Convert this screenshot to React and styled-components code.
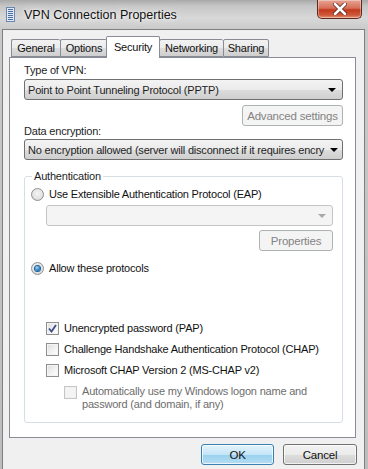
import React from 'react';
import styled, { createGlobalStyle } from 'styled-components';

const GlobalStyle = createGlobalStyle`
  html, body { margin: 0; padding: 0; background: #c4c4c4; }
  body {
    font-family: "Liberation Sans", Arial, sans-serif;
    font-size: 11px;
    letter-spacing: -0.2px;
    color: #1e1e1e;
  }
`;

const Window = styled.div`
  width: 368px;
  height: 469px;
  overflow: hidden;
  background: linear-gradient(180deg, #a9a9a9 0px, #c6c6c6 6px, #d8d8d8 18px, #c9c9c9 30px, #bdbdbd 100%);
  display: flex;
  flex-direction: column;
`;

const TitleBar = styled.div`
  height: 29px;
  display: flex;
  align-items: flex-start;
  flex-shrink: 0;
`;

const TitleGroup = styled.div`
  display: flex;
  align-items: center;
  gap: 9px;
  padding: 7px 0 0 6px;
  flex: 1;
`;

const Title = styled.span`
  font-size: 12.5px;
  letter-spacing: 0;
  color: #111;
  text-shadow: 0 0 8px rgba(255, 255, 255, 0.9), 0 0 3px rgba(255, 255, 255, 0.9);
`;

const CloseButton = styled.div`
  width: 43px;
  height: 18px;
  margin-right: 6px;
  border: 1px solid #5a2a20;
  border-top: none;
  border-radius: 0 0 5px 5px;
  background: linear-gradient(180deg, #e6a493 0%, #d66f59 45%, #c2391c 55%, #cf5a3c 85%, #e69a7c 100%);
  box-shadow: inset 0 0 0 1px rgba(255, 255, 255, 0.35);
  display: flex;
  align-items: center;
  justify-content: center;
`;

const Client = styled.div`
  flex: 1;
  margin: 0 3px 0 2px;
  background: #f0f0f0;
  border: 1px solid #7f7f7f;
  border-bottom: none;
  padding: 6px 7px 0 6px;
  display: flex;
  flex-direction: column;
`;

const TabStrip = styled.div`
  display: flex;
  align-items: flex-end;
  height: 21px;
  padding-left: 2px;
  position: relative;
  z-index: 1;
`;

const Tab = styled.div`
  width: ${(p) => p.w}px;
  height: ${(p) => (p.active ? '22px' : '18px')};
  margin: 0 ${(p) => (p.active ? '-1px' : '0')} ${(p) => (p.active ? '-1px' : '0')};
  box-sizing: border-box;
  display: flex;
  align-items: center;
  justify-content: center;
  padding-bottom: ${(p) => (p.active ? '2px' : '0')};
  border: 1px solid #898c95;
  border-bottom: ${(p) => (p.active ? 'none' : '1px solid #898c95')};
  border-right: ${(p) => (p.active || p.last ? '1px solid #898c95' : 'none')};
  border-radius: 2px 2px 0 0;
  background: ${(p) => (p.active ? '#fff' : 'linear-gradient(180deg, #f2f2f2 0%, #ebebeb 50%, #dddddd 51%, #cfcfcf 100%)')};
  color: #111;
  position: relative;
  z-index: ${(p) => (p.active ? 2 : 1)};
`;

const Panel = styled.div`
  width: 347px;
  height: 381px;
  box-sizing: border-box;
  background: #fff;
  border: 1px solid #898c95;
  padding: 5px 12px 0 14px;
  display: flex;
  flex-direction: column;
`;

const Label = styled.div`
  height: 14px;
  line-height: 14px;
  margin-top: ${(p) => p.mt || 0}px;
`;

const Select = styled.div`
  height: 21px;
  box-sizing: border-box;
  margin-top: ${(p) => p.mt || 0}px;
  margin-left: ${(p) => p.ml || 0}px;
  border: 1px solid ${(p) => (p.disabled ? '#c4c4c4' : '#707070')};
  border-radius: 3px;
  background: ${(p) => (p.disabled ? '#f4f4f4' : 'linear-gradient(180deg, #f3f3f3 0%, #ebebeb 50%, #dddddd 51%, #cfcfcf 100%)')};
  display: flex;
  align-items: center;
  padding: 0 6px 0 3px;
  white-space: nowrap;
`;

const SelectText = styled.span`
  flex: 1;
`;

const Arrow = styled.span`
  width: 0;
  height: 0;
  border-left: 4px solid transparent;
  border-right: 4px solid transparent;
  border-top: 4px solid ${(p) => (p.disabled ? '#a8a8a8' : '#000')};
  margin-left: 6px;
  flex-shrink: 0;
`;

const ButtonRow = styled.div`
  display: flex;
  justify-content: flex-end;
  margin-top: ${(p) => p.mt || 0}px;
`;

const Button = styled.div`
  width: ${(p) => p.w}px;
  height: 21px;
  box-sizing: border-box;
  border-radius: 3px;
  display: flex;
  align-items: center;
  justify-content: center;
  font-size: 11.5px;
  border: 1px solid ${(p) => (p.disabled ? '#adb2b5' : p.primary ? '#3c7fb1' : '#707070')};
  color: ${(p) => (p.disabled ? '#838383' : '#111')};
  background: ${(p) =>
    p.disabled
      ? '#f4f4f4'
      : p.primary
      ? 'linear-gradient(180deg, #e5f4fc 0%, #c4e5f6 50%, #98d1ef 51%, #b5ddf2 100%)'
      : 'linear-gradient(180deg, #f2f2f2 0%, #ebebeb 50%, #dddddd 51%, #cfcfcf 100%)'};
  box-shadow: ${(p) => (p.disabled ? 'none' : 'inset 0 0 0 1px rgba(255,255,255,0.7)')};
`;

const Group = styled.fieldset`
  margin: 9px 0 0 0;
  padding: 0 9px 11px 6px;
  border: 1px solid #d5dfe5;
  border-radius: 3px;
  display: flex;
  flex-direction: column;
`;

const Legend = styled.legend`
  padding: 0 2px;
  margin-left: 1px;
  line-height: 14px;
`;

const Option = styled.div`
  display: flex;
  align-items: flex-start;
  gap: 5px;
  line-height: ${(p) => (p.disabled ? 13 : 14)}px;
  margin-top: ${(p) => p.mt || 0}px;
  margin-left: ${(p) => p.ml || 0}px;
  color: ${(p) => (p.disabled ? '#6d6d6d' : '#111')};
`;

const Radio = styled.span`
  width: 13px;
  height: 13px;
  box-sizing: border-box;
  border-radius: 50%;
  border: 1px solid #8e8f8f;
  background: radial-gradient(circle at 50% 40%, #f4f4f4 0%, #e4e4e4 55%, #cfcfcf 100%);
  display: flex;
  align-items: center;
  justify-content: center;
  flex-shrink: 0;
  margin-top: 1px;
`;

const RadioDot = styled.span`
  width: 5px;
  height: 5px;
  border-radius: 50%;
  background: radial-gradient(circle at 40% 35%, #a6d9f6 0%, #2a83c5 55%, #0d4d85 100%);
  box-shadow: 0 0 0 1px #1a5f99;
`;

const Check = styled.span`
  width: 13px;
  height: 13px;
  box-sizing: border-box;
  border: 1px solid ${(p) => (p.disabled ? '#c6c6c6' : '#8e8f8f')};
  background: ${(p) => (p.disabled ? '#f4f4f4' : 'linear-gradient(135deg, #dcdcdc 0%, #f4f4f4 60%, #ffffff 100%)')};
  box-shadow: inset 0 0 0 1px ${(p) => (p.disabled ? '#f0f0f0' : '#f4f4f4')};
  flex-shrink: 0;
  margin-top: 1px;
  display: flex;
  align-items: center;
  justify-content: center;
`;

const Spacer = styled.div`
  height: ${(p) => p.h}px;
  flex-shrink: 0;
`;

const Footer = styled.div`
  display: flex;
  justify-content: flex-end;
  gap: 9px;
  padding: 6px 0 0 0;
`;

const ConnIcon = () => (
  <svg width="9" height="15" viewBox="0 0 9 15">
    <rect x="0.5" y="0.5" width="8" height="14" fill="#dfe8f3" stroke="#6b87ad" />
    {[2, 4, 6, 8, 10, 12].map((y) => (
      <rect key={y} x="2" y={y} width="5" height="1" fill="#4d6f9c" />
    ))}
  </svg>
);

const CloseX = () => (
  <svg width="14" height="12" viewBox="0 0 14 12">
    <path d="M2 1 L12 11 M12 1 L2 11" stroke="#5b2418" strokeWidth="4.2" strokeLinecap="round" />
    <path d="M2 1 L12 11 M12 1 L2 11" stroke="#fff" strokeWidth="2.6" strokeLinecap="round" />
  </svg>
);

const Tick = () => (
  <svg width="9" height="9" viewBox="0 0 9 9">
    <path d="M1 4.5 L3.5 7.5 L8 1" fill="none" stroke="#3a4f8a" strokeWidth="1.8" />
  </svg>
);

const App = () => (
  <>
    <GlobalStyle />
    <Window>
      <TitleBar>
        <TitleGroup>
          <ConnIcon />
          <Title>VPN Connection Properties</Title>
        </TitleGroup>
        <CloseButton>
          <CloseX />
        </CloseButton>
      </TitleBar>
      <Client>
        <TabStrip>
          <Tab w={49}>General</Tab>
          <Tab w={47}>Options</Tab>
          <Tab w={54} active>Security</Tab>
          <Tab w={64}>Networking</Tab>
          <Tab w={46} last>Sharing</Tab>
        </TabStrip>
        <Panel>
          <Label>Type of VPN:</Label>
          <Select mt={2}>
            <SelectText>Point to Point Tunneling Protocol (PPTP)</SelectText>
            <Arrow />
          </Select>
          <ButtonRow mt={5}>
            <Button w={101} disabled>Advanced settings</Button>
          </ButtonRow>
          <Label mt={-2}>Data encryption:</Label>
          <Select mt={1}>
            <SelectText>No encryption allowed (server will disconnect if it requires encry</SelectText>
            <Arrow />
          </Select>
          <Group>
            <Legend>Authentication</Legend>
            <Option mt={4}>
              <Radio />
              <span>Use Extensible Authentication Protocol (EAP)</span>
            </Option>
            <Select disabled ml={15} mt={4}>
              <SelectText />
              <Arrow disabled />
            </Select>
            <ButtonRow mt={4}>
              <Button w={74} disabled>Properties</Button>
            </ButtonRow>
            <Option mt={10}>
              <Radio>
                <RadioDot />
              </Radio>
              <span>Allow these protocols</span>
            </Option>
            <Spacer h={46} />
            <Option ml={15}>
              <Check>
                <Tick />
              </Check>
              <span>Unencrypted password (PAP)</span>
            </Option>
            <Option ml={15} mt={7}>
              <Check />
              <span>Challenge Handshake Authentication Protocol (CHAP)</span>
            </Option>
            <Option ml={15} mt={7}>
              <Check />
              <span>Microsoft CHAP Version 2 (MS-CHAP v2)</span>
            </Option>
            <Option ml={33} mt={8} disabled>
              <Check disabled />
              <span>
                Automatically use my Windows logon name and
                <br />
                password (and domain, if any)
              </span>
            </Option>
          </Group>
        </Panel>
        <Footer>
          <Button w={73} primary>OK</Button>
          <Button w={74}>Cancel</Button>
        </Footer>
      </Client>
    </Window>
  </>
);

export default App;
